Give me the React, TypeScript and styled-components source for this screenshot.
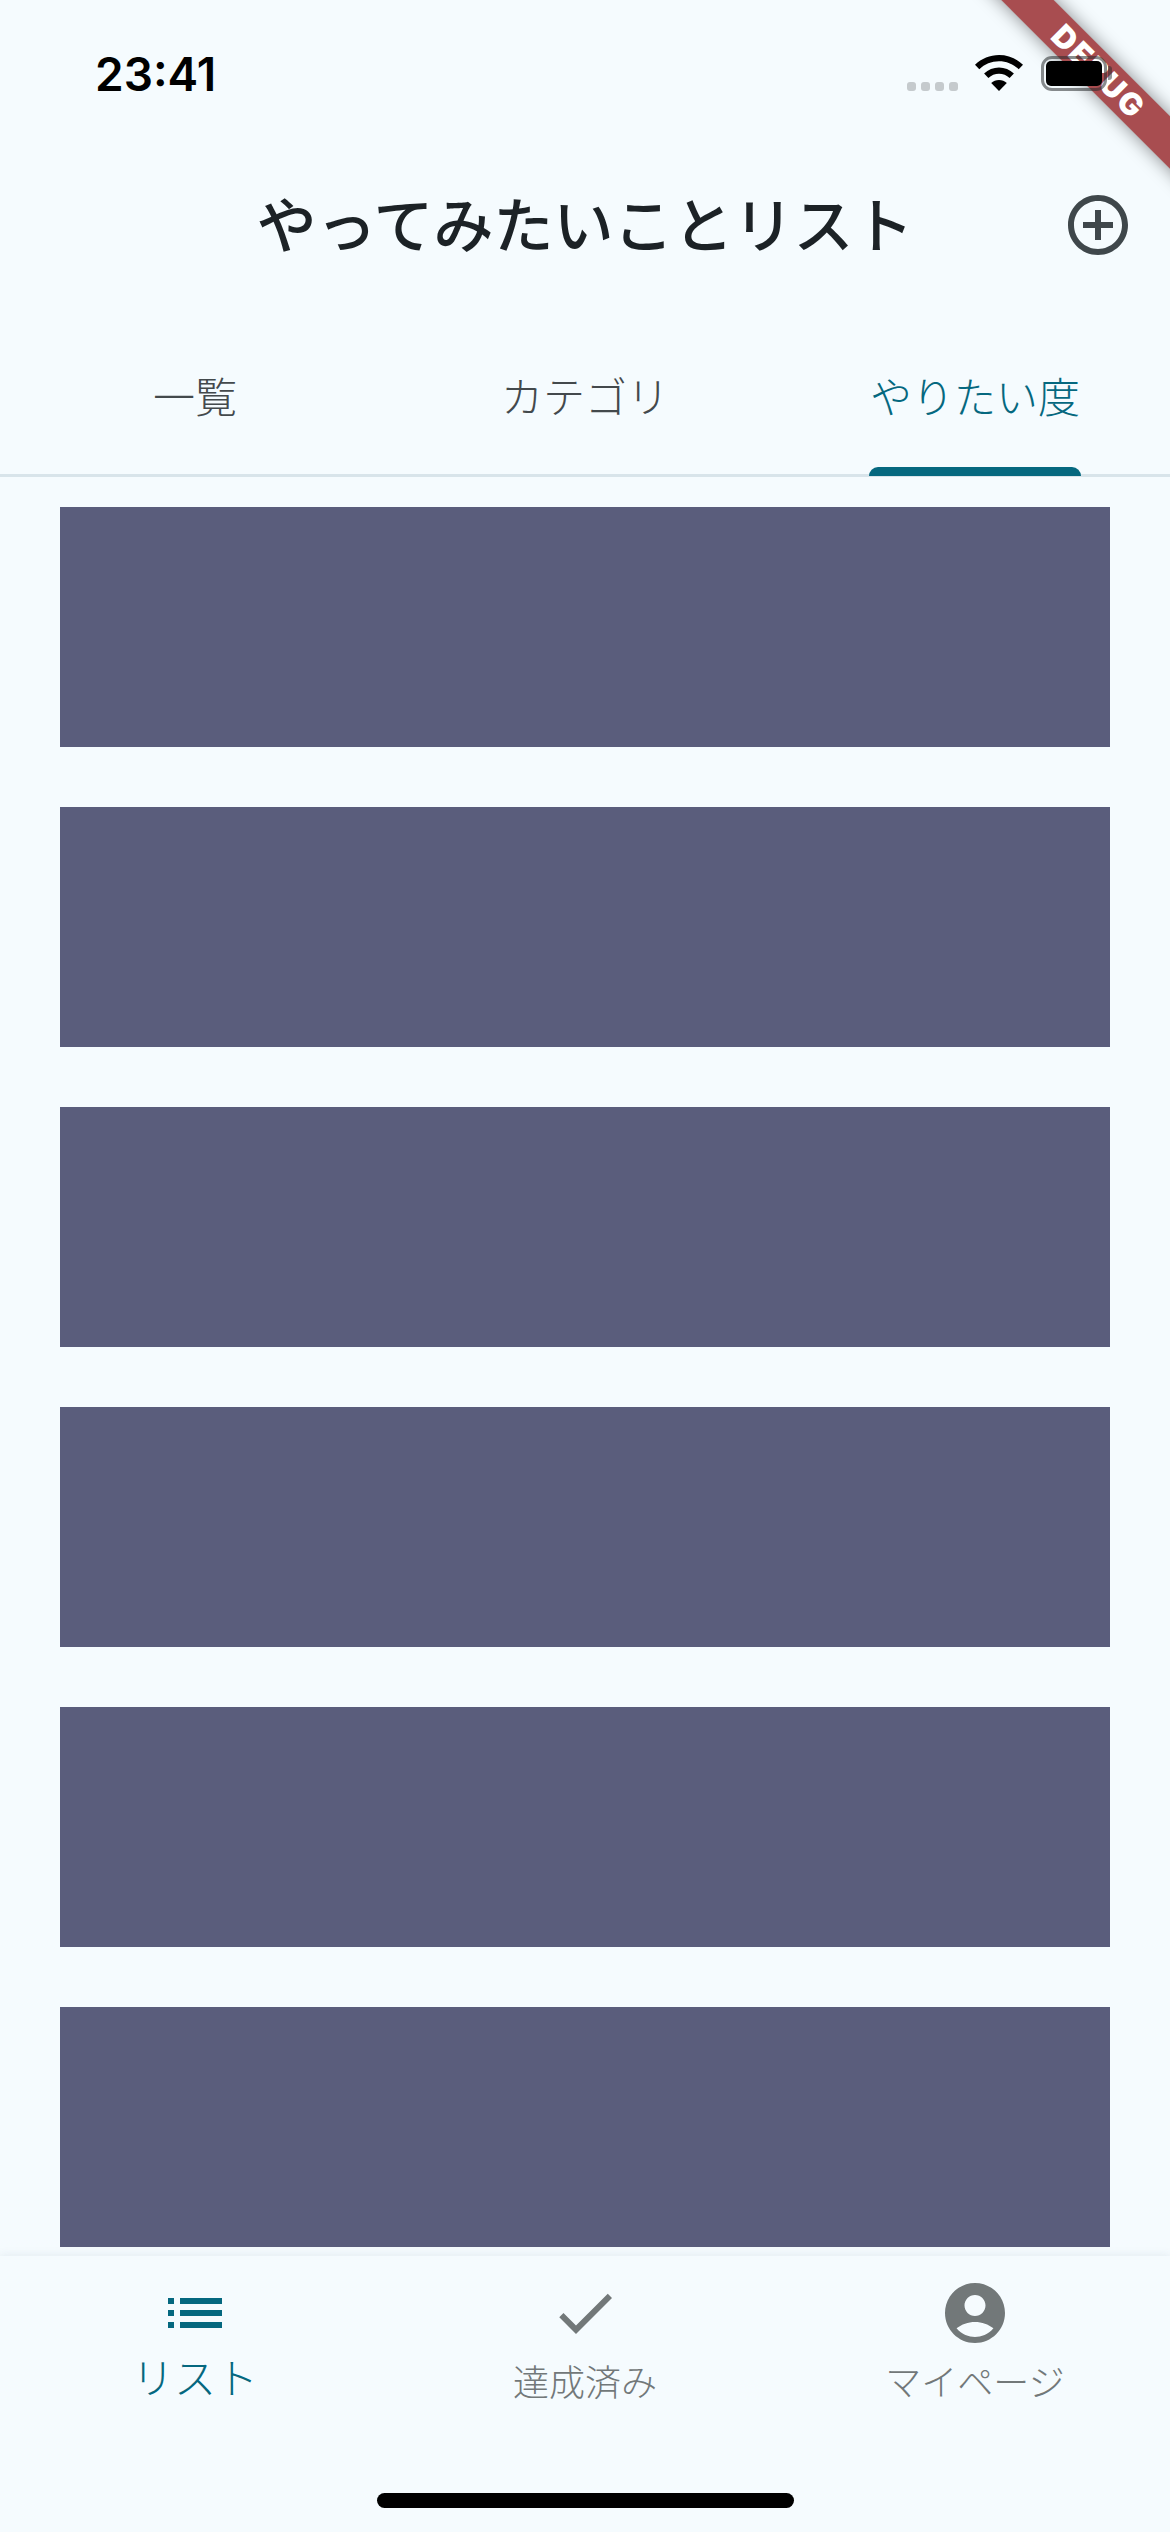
import React from "react";
import styled, { createGlobalStyle } from "styled-components";

const GlobalStyle = createGlobalStyle`
  html, body {
    margin: 0;
    padding: 0;
    background: #f5fbfe;
  }
  * { box-sizing: border-box; }
`;

const jpFont = `"Noto Sans CJK JP", "Noto Sans", sans-serif`;

const Screen = styled.div`
  position: relative;
  width: 1170px;
  height: 2532px;
  display: flex;
  flex-direction: column;
  overflow: hidden;
  background: #f5fbfe;
  font-family: ${jpFont};
`;

const StatusBar = styled.div`
  height: 132px;
  flex: none;
  display: flex;
  justify-content: space-between;
  padding: 0 63px 0 95px;
`;

const Clock = styled.div`
  margin-top: 47px;
  font-family: Inter, "Liberation Sans", sans-serif;
  font-size: 46px;
  line-height: 54px;
  font-weight: 600;
  color: #000;
`;

/* the system icons sit on top of the debug ribbon */
const StatusIcons = styled.div`
  position: relative;
  z-index: 2;
  display: flex;
  align-items: flex-start;
  margin-top: 55px;
`;

const SignalDots = styled.div`
  display: flex;
  gap: 5px;
  margin-top: 27px;
  margin-right: 17px;
`;

const SignalDot = styled.span`
  width: 9px;
  height: 9px;
  border-radius: 3px;
  background: #c5cacd;
`;

const Battery = styled.div`
  position: relative;
  width: 66px;
  height: 35px;
  margin-left: 18px;
  margin-top: 1px;
  padding: 2px 2px;
  border: 3px solid rgba(40, 44, 46, 0.55);
  border-radius: 11px;

  &::after {
    content: "";
    position: absolute;
    right: -8px;
    top: 7px;
    width: 4px;
    height: 14px;
    border-radius: 0 3px 3px 0;
    background: rgba(40, 44, 46, 0.5);
  }
`;

const BatteryFill = styled.div`
  width: 100%;
  height: 100%;
  border-radius: 5px;
  background: #000;
`;

const Header = styled.header`
  position: relative;
  height: 186px;
  flex: none;
  display: flex;
  align-items: center;
  justify-content: center;
  padding-bottom: 6px;
`;

const Title = styled.h1`
  margin: 0;
  font-size: 60px;
  line-height: 80px;
  font-weight: 500;
  color: #1c2226;
`;

const AddButton = styled.button`
  position: absolute;
  right: 36px;
  top: 57px;
  width: 72px;
  height: 72px;
  padding: 0;
  border: 0;
  background: none;
  color: #3f474b;
`;

const TabBar = styled.nav`
  height: 159px;
  flex: none;
  display: grid;
  grid-template-columns: repeat(3, 1fr);
  border-bottom: 3px solid #d8e4ea;
`;

const Tab = styled.div<{ $active?: boolean }>`
  position: relative;
  display: flex;
  justify-content: center;
  padding-top: 49px;
  font-size: 42px;
  line-height: 56px;
  font-weight: 300;
  color: ${(p) => (p.$active ? "#05687f" : "#43494c")};
`;

const TabLabel = styled.span`
  position: relative;
  align-self: flex-start;
`;

const TabIndicator = styled.span`
  position: absolute;
  left: -1px;
  right: -1px;
  top: 100px;
  height: 9px;
  border-radius: 9px 9px 0 0;
  background: #05687f;
`;

const CardList = styled.main`
  flex: 1;
  min-height: 0;
  overflow: hidden;
  display: flex;
  flex-direction: column;
  gap: 60px;
  padding: 30px 60px 0;
`;

const Card = styled.div`
  height: 240px;
  flex: none;
  background: #5a5d7c;
`;

const BottomNav = styled.footer`
  position: relative;
  height: 276px;
  flex: none;
  display: grid;
  grid-template-columns: repeat(3, 1fr);
  background: #f5fbfe;
  box-shadow: 0 -2px 8px rgba(60, 90, 110, 0.08);
`;

const NavItem = styled.div<{ $active?: boolean }>`
  display: flex;
  flex-direction: column;
  align-items: center;
  padding-top: 21px;
  color: ${(p) => (p.$active ? "#05687f" : "#727879")};
`;

const NavLabel = styled.span<{ $active?: boolean }>`
  font-size: ${(p) => (p.$active ? "42px" : "36px")};
  line-height: 56px;
  font-weight: 300;
  margin-top: ${(p) => (p.$active ? "-1px" : "3px")};
`;

const HomeIndicator = styled.div`
  position: absolute;
  left: 377px;
  top: 237px;
  width: 417px;
  height: 15px;
  border-radius: 8px;
  background: #000;
`;

const DebugRibbon = styled.div`
  position: absolute;
  z-index: 1;
  left: 899px;
  top: 53px;
  width: 400px;
  height: 37px;
  transform: rotate(45deg);
  display: flex;
  align-items: center;
  justify-content: center;
  background: rgba(146, 28, 31, 0.78);
  box-shadow: 0 0 18px rgba(0, 0, 0, 0.45);
  color: #fff;
  font-family: Inter, "Liberation Sans", sans-serif;
  font-size: 31px;
  line-height: 37px;
  font-weight: 900;
  letter-spacing: 2px;
  pointer-events: none;
`;

function WifiIcon() {
  return (
    <svg width="48" height="36" viewBox="0 0 48 36">
      <path
        fill="#000"
        d="M24 0c9 0 17.400 3.400 24 9.800l-4.300 4.400C38.400 9.200 31.500 6.300 24 6.300S9.600 9.200 4.300 14.200L0 9.800C6.600 3.400 15 0 24 0z"
      />
      <path
        fill="#000"
        d="M24 12.500c5.600 0 10.800 2.100 14.900 6l-4.300 4.400c-2.900-2.700-6.600-4.200-10.600-4.200s-7.700 1.500-10.600 4.200l-4.300-4.400c4.100-3.900 9.300-6 14.900-6z"
      />
      <path fill="#000" d="M24 25c3 0 5.700 1 7.800 3L24 36l-7.800-8c2.100-2 4.800-3 7.800-3z" />
    </svg>
  );
}

function AddCircleIcon() {
  return (
    <svg width="72" height="72" viewBox="0 0 24 24" fill="currentColor">
      <path d="M13 7h-2v4H7v2h4v4h2v-4h4v-2h-4V7zm-1-5C6.480 2 2 6.480 2 12s4.480 10 10 10 10-4.480 10-10S17.520 2 12 2zm0 18c-4.410 0-8-3.590-8-8s3.590-8 8-8 8 3.590 8 8-3.590 8-8 8z" />
    </svg>
  );
}

function ListIcon() {
  return (
    <svg width="72" height="72" viewBox="0 0 24 24" fill="currentColor">
      <path d="M3 13h2v-2H3v2zm0 4h2v-2H3v2zm0-8h2V7H3v2zm4 4h14v-2H7v2zm0 4h14v-2H7v2zM7 7v2h14V7H7z" />
    </svg>
  );
}

function CheckIcon() {
  return (
    <svg width="72" height="72" viewBox="0 0 24 24" fill="currentColor">
      <path d="M9 16.170L4.830 12l-1.410 1.410L9 19 21 7l-1.410-1.410z" />
    </svg>
  );
}

function AccountIcon() {
  return (
    <svg width="72" height="72" viewBox="0 0 24 24" fill="currentColor">
      <path d="M12 2C6.480 2 2 6.480 2 12s4.480 10 10 10 10-4.480 10-10S17.520 2 12 2zm0 4c1.930 0 3.500 1.570 3.500 3.500S13.930 13 12 13s-3.500-1.570-3.500-3.500S10.070 6 12 6zm0 14c-2.030 0-4.430-.82-6.140-2.880C7.550 15.800 9.680 15 12 15s4.450.8 6.140 2.120C16.430 19.180 14.030 20 12 20z" />
    </svg>
  );
}

const cards = [1, 2, 3, 4, 5, 6];

export default function App() {
  return (
    <Screen>
      <GlobalStyle />
      <StatusBar>
        <Clock>23:41</Clock>
        <StatusIcons>
          <SignalDots>
            <SignalDot />
            <SignalDot />
            <SignalDot />
            <SignalDot />
          </SignalDots>
          <WifiIcon />
          <Battery>
            <BatteryFill />
          </Battery>
        </StatusIcons>
      </StatusBar>
      <Header>
        <Title>やってみたいことリスト</Title>
        <AddButton>
          <AddCircleIcon />
        </AddButton>
      </Header>
      <TabBar>
        <Tab>
          <TabLabel>一覧</TabLabel>
        </Tab>
        <Tab>
          <TabLabel>カテゴリ</TabLabel>
        </Tab>
        <Tab $active>
          <TabLabel>
            やりたい度
            <TabIndicator />
          </TabLabel>
        </Tab>
      </TabBar>
      <CardList>
        {cards.map((id) => (
          <Card key={id} />
        ))}
      </CardList>
      <BottomNav>
        <NavItem $active>
          <ListIcon />
          <NavLabel $active>リスト</NavLabel>
        </NavItem>
        <NavItem>
          <CheckIcon />
          <NavLabel>達成済み</NavLabel>
        </NavItem>
        <NavItem>
          <AccountIcon />
          <NavLabel>マイページ</NavLabel>
        </NavItem>
        <HomeIndicator />
      </BottomNav>
      <DebugRibbon>DEBUG</DebugRibbon>
    </Screen>
  );
}
